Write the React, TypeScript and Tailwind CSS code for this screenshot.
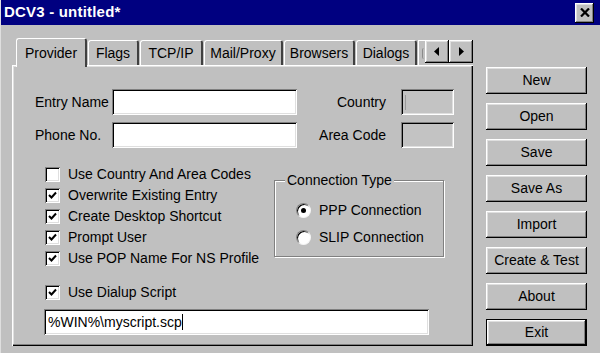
import React from 'react';

const raised = 'shadow-[inset_-1px_-1px_0_#000,inset_1px_1px_0_#fff,inset_-2px_-2px_0_#808080,inset_2px_2px_0_#dfdfdf]';
const sunken = 'shadow-[inset_1px_1px_0_#808080,inset_-1px_-1px_0_#fff,inset_2px_2px_0_#000,inset_-2px_-2px_0_#dfdfdf]';

const Field: React.FC<{ className?: string; disabled?: boolean; children?: React.ReactNode }> = ({ className = '', disabled, children }) => (
  <div className={`h-[26px] flex items-center pl-[4px] ${disabled ? 'bg-[#c3c3c3]' : 'bg-white'} ${sunken} ${className}`}>
    {children}
  </div>
);

const CheckBox: React.FC<{ label: string; checked?: boolean }> = ({ label, checked }) => (
  <div className="flex items-center h-[21px]">
    <div className={`w-[15px] h-[15px] bg-white flex items-center justify-center ${sunken}`}>
      {checked && (
        <svg width="9" height="9" viewBox="0 0 9 9">
          <path d="M1 4 L3.5 6.5 L8 1.5" stroke="#000" strokeWidth="2" fill="none" />
        </svg>
      )}
    </div>
    <span className="ml-[8px]">{label}</span>
  </div>
);

const Radio: React.FC<{ label: string; checked?: boolean }> = ({ label, checked }) => (
  <div className="flex items-center h-[22px]">
    <div className="w-[15px] h-[15px] rounded-full bg-white flex items-center justify-center border border-t-[#808080] border-l-[#808080] border-r-[#f4f4f4] border-b-[#f4f4f4] shadow-[inset_1px_1px_0_#000]">
      {checked && <div className="w-[5px] h-[5px] rounded-full bg-black" />}
    </div>
    <span className="ml-[8px]">{label}</span>
  </div>
);

const tabs = [
  { label: 'Flags', w: 'w-[51px]' },
  { label: 'TCP/IP', w: 'w-[63px]' },
  { label: 'Mail/Proxy', w: 'w-[79px]' },
  { label: 'Browsers', w: 'w-[71px]' },
  { label: 'Dialogs', w: 'w-[61px]' },
];

const buttons = ['New', 'Open', 'Save', 'Save As', 'Import', 'Create & Test', 'About'];

export default function App() {
  return (
    <div className="w-[600px] h-[353px] overflow-hidden bg-[#c0c0c0] text-[14px] text-black font-['Liberation_Sans',Arial,sans-serif] border-l border-[#dfdfdf]">
      {/* Title bar */}
      <div className="h-[25px] bg-[#000080] flex items-center justify-between pl-[3px] pr-[6px]">
        <span className="text-white font-bold text-[15px] tracking-[0.2px]">DCV3 - untitled*</span>
        <div className={`w-[19px] h-[20px] bg-[#c0c0c0] flex items-center justify-center ${raised}`}>
          <svg width="10" height="9" viewBox="0 0 10 9">
            <path d="M1 0.5 L9 8.5 M9 0.5 L1 8.5" stroke="#000" strokeWidth="2.2" />
          </svg>
        </div>
      </div>

      <div className="flex pl-[11px] pt-[13px]">
        {/* Tab control */}
        <div className="w-[461px]">
          <div className="h-[27px] flex items-end">
            <div className="relative z-10 ml-[4px] w-[71px] h-[29px] -mb-[2px] bg-[#c0c0c0] rounded-t-[3px] border-t border-l border-white border-r-2 border-r-[#404040] flex items-start justify-center pt-[4px]">
              Provider
            </div>
            {tabs.map(t => (
              <div
                key={t.label}
                className={`ml-[1px] ${t.w} h-[25px] rounded-t-[3px] border-t border-l border-white border-r-2 border-r-[#404040] flex items-center justify-center`}
              >
                {t.label}
              </div>
            ))}
            {/* partly hidden tab behind the scroll arrows */}
            <div className="ml-[1px] w-[7px] h-[25px] border-t border-l border-white pl-[3px] pt-[7px]">
              <div className="w-[2px] h-[11px] rounded-l-full border-l border-[#8a8a8a]" />
            </div>
            <div className="flex mb-[2px]">
              <div className={`w-[24px] h-[23px] flex items-center justify-center ${raised}`}>
                <svg width="6" height="9" viewBox="0 0 6 9"><path d="M5 0 L0 4.5 L5 9 Z" fill="#000" /></svg>
              </div>
              <div className={`w-[24px] h-[23px] flex items-center justify-center ${raised}`}>
                <svg width="6" height="9" viewBox="0 0 6 9"><path d="M1 0 L6 4.5 L1 9 Z" fill="#000" /></svg>
              </div>
            </div>
          </div>

          <div className="h-[281px] pl-[23px] pt-[24px] shadow-[inset_1px_1px_0_#fff,inset_-1px_-1px_0_#000,inset_-2px_-2px_0_#808080,inset_2px_2px_0_#dfdfdf]">
            <div className="flex items-center h-[26px]">
              <span className="w-[77px]">Entry Name</span>
              <Field className="w-[185px]" />
              <span className="w-[89px] text-right">Country</span>
              <Field className="ml-[15px] w-[53px]" disabled>
                <div className="w-px h-[15px] bg-[#9a9a9a]" />
              </Field>
            </div>
            <div className="flex items-center h-[26px] mt-[7px]">
              <span className="w-[77px]">Phone No.</span>
              <Field className="w-[185px]" />
              <span className="w-[89px] text-right">Area Code</span>
              <Field className="ml-[15px] w-[53px]" disabled />
            </div>

            <div className="flex mt-[16px] pl-[10px]">
              <div className="w-[231px] flex flex-col">
                <CheckBox label="Use Country And Area Codes" />
                <CheckBox label="Overwrite Existing Entry" checked />
                <CheckBox label="Create Desktop Shortcut" checked />
                <CheckBox label="Prompt User" checked />
                <CheckBox label="Use POP Name For NS Profile" checked />
              </div>
              <div className="relative mt-[16px] -ml-[2px] w-[170px] h-[77px] border border-[#808080] shadow-[1px_1px_0_#fff,inset_1px_1px_0_#fff] pl-[21px] pt-[18px] flex flex-col gap-[5px]">
                <span className="absolute -top-[10px] left-[10px] bg-[#c0c0c0] px-[2px] leading-[18px]">Connection Type</span>
                <Radio label="PPP Connection" checked />
                <Radio label="SLIP Connection" />
              </div>
            </div>

            <div className="mt-[13px] pl-[10px]">
              <CheckBox label="Use Dialup Script" checked />
              <Field className="mt-[6px] -ml-[1px] w-[385px] pl-[3px]">
                <span>%WIN%\myscript.scp</span>
                <div className="w-px h-[16px] bg-black" />
              </Field>
            </div>
          </div>
        </div>

        {/* Buttons */}
        <div className="ml-[13px] pt-[29px] flex flex-col gap-[9px]">
          {buttons.map(b => (
            <div key={b} className={`w-[101px] h-[27px] flex items-center justify-center ${raised}`}>
              {b}
            </div>
          ))}
          <div className="w-[101px] h-[27px] border border-black">
            <div className={`w-full h-full flex items-center justify-center ${raised}`}>Exit</div>
          </div>
        </div>
      </div>
    </div>
  );
}
